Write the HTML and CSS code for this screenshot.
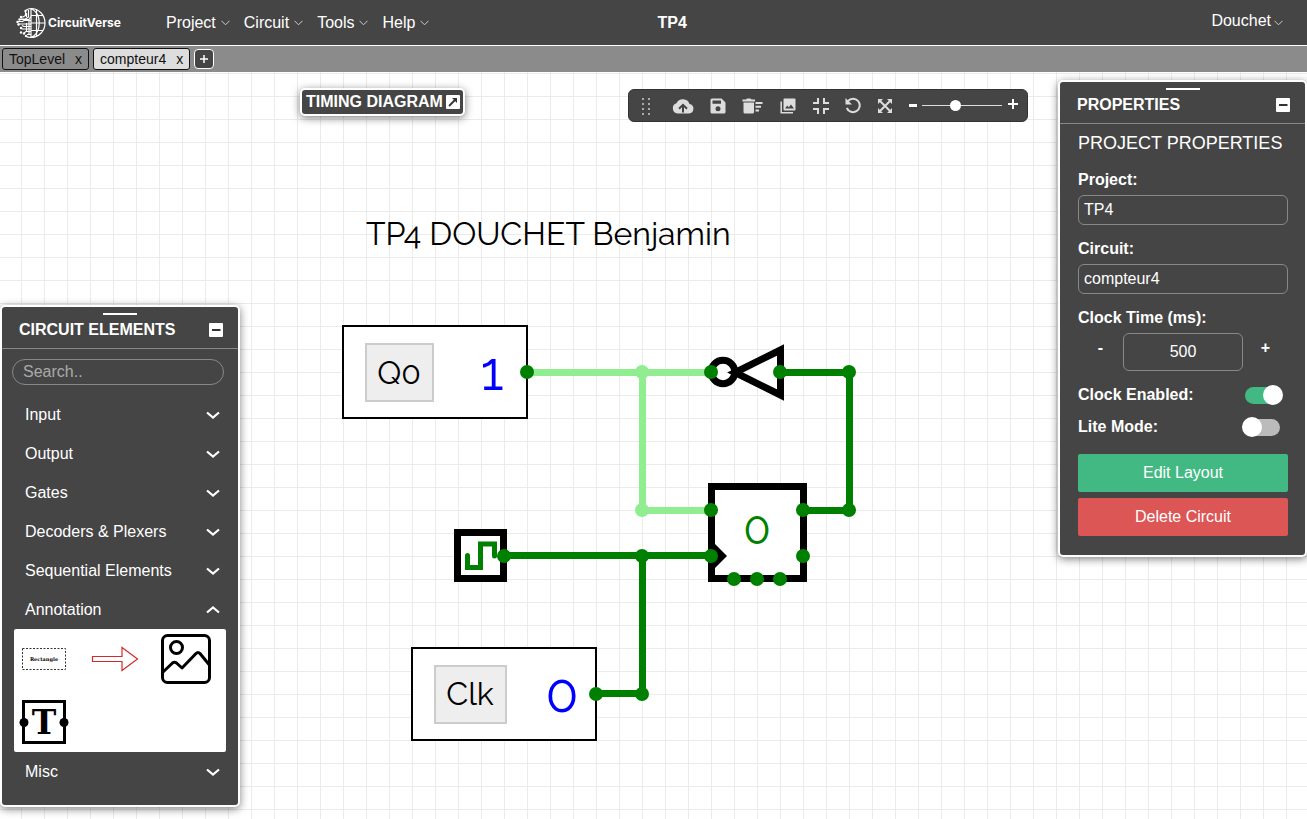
FILE: index.html
```html
<!DOCTYPE html>
<html lang="en">
<head>
<meta charset="utf-8">
<meta name="viewport" content="width=device-width, initial-scale=1">
<title>TP4 - CircuitVerse</title>
<link rel="stylesheet" href="styles.css">
</head>
<body>
<svg class="defs" aria-hidden="true">
  <symbol id="thin-chevron" viewBox="0 0 9 6"><path d="M.5 .8 4.5 4.8 8.500 .8" fill="none" stroke="#ccc" stroke-width="1"/></symbol>
  <symbol id="chevron" viewBox="0 0 16 10"><path d="M2 2.500 8 7.500 14 2.500" fill="none" stroke="#fff" stroke-width="2.200"/></symbol>
  <symbol id="minus-box" viewBox="0 0 14 14"><rect width="14" height="14" rx="1" fill="#fff"/><path d="M3 7h8.500" stroke="#333" stroke-width="2"/></symbol>
</svg>

<header class="navbar">
  <div class="nav-left">
    <a class="logo" href="#">
      <svg width="31" height="32" viewBox="0 0 31 32" fill="none" stroke="#fff" stroke-width="1.200">
        <path d="M15 1.500a14 14.500 0 0 1 0 29zM15 1.500c11 5 11 24 0 29M15 8.500h12M15 16h14M15 23.500h12M20.500 2.500v27"/>
        <path d="M15 1.500c-2 0-4 1-5 1.800M12.500 3v7l-3 2H4.500M9.500 4v4.500L7 10H5M15 9.500l-2 3H3M15 13.500H8l-1.500 1H1M15 17H2M15 19.500H8l-2-1M15 22H6.500L5 21M15 24.500h-5l-2 1.500M15 27.500h-4M13 12v16M10.500 6v4M10.500 16v9M15 30.500c-2 0-4-.5-5-1.500"/>
        <g fill="#fff" stroke="none"><circle cx="9.500" cy="4" r="1.200"/><circle cx="5" cy="10" r="1.200"/><circle cx="3.500" cy="12.500" r="1.200"/><circle cx="1.500" cy="15" r="1.200"/><circle cx="2.500" cy="17.500" r="1.200"/><circle cx="5" cy="21" r="1.200"/><circle cx="5" cy="25.500" r="1.200"/><circle cx="8" cy="26.500" r="1.200"/><circle cx="10" cy="29" r="1.200"/></g>
      </svg>
      <span>CircuitVerse</span>
    </a>
    <nav class="menu">
      <button type="button">Project<svg width="9" height="6"><use href="#thin-chevron"/></svg></button>
      <button type="button">Circuit<svg width="9" height="6"><use href="#thin-chevron"/></svg></button>
      <button type="button">Tools<svg width="9" height="6"><use href="#thin-chevron"/></svg></button>
      <button type="button">Help<svg width="9" height="6"><use href="#thin-chevron"/></svg></button>
    </nav>
  </div>
  <div class="nav-right">
    <strong class="project-name">TP4</strong>
    <button type="button" class="user">Douchet<svg width="9" height="6"><use href="#thin-chevron"/></svg></button>
  </div>
</header>

<div class="tabs">
  <div class="tab"><span>TopLevel</span><button type="button" aria-label="Close TopLevel">x</button></div>
  <div class="tab tab-current"><span>compteur4</span><button type="button" aria-label="Close compteur4">x</button></div>
  <button type="button" class="tab-add" aria-label="New circuit"><svg width="10" height="10" viewBox="0 0 10 10"><path d="M1 5h8M5 1v8" stroke="#fff" stroke-width="1.500"/></svg></button>
</div>

<main class="workspace">
  <svg class="board" width="100%" height="100%">
    <defs>
      <pattern id="grid" x="21" y="1" width="23" height="23" patternUnits="userSpaceOnUse"><path d="M.5 0v23M0 .5h23" stroke="#ebebeb" fill="none"/></pattern>
    </defs>
    <rect width="100%" height="100%" fill="url(#grid)"/>
    <g transform="translate(0 -72)">
      <text class="note" x="366" y="245">TP4 DOUCHET Benjamin</text>

      <g fill="#fff" stroke="#000" stroke-width="2">
        <rect x="343" y="326" width="184" height="92"/>
        <rect x="412" y="648" width="184" height="92"/>
      </g>
      <g fill="#eee" stroke="#ccc" stroke-width="2">
        <rect x="366" y="344" width="67" height="57"/>
        <rect x="435" y="666" width="71" height="57"/>
      </g>
      <text class="tag" x="399" y="384">Q0</text>
      <text class="tag" x="470" y="705">Clk</text>
      <text class="bit" x="492" y="390">1</text>
      <text class="bit" x="562" y="712">0</text>

      <g fill="#fff" stroke="#000" stroke-width="7">
        <rect x="457.500" y="532.500" width="46" height="46"/>
        <rect x="711.500" y="486.500" width="92" height="92"/>
        <circle cx="723" cy="372" r="11.800"/>
        <path d="M780.500 350v45L735 372.500z"/>
      </g>
      <path d="M711 540l16 16-16 16z"/>
      <path d="M467.500 555.500v12h13v-23.500h14v12" fill="none" stroke="green" stroke-width="5" stroke-linecap="round"/>
      <text class="state" x="757" y="544">0</text>

      <g fill="none" stroke-width="7">
        <path d="M527 372.500h184M642.500 372v138M642 510.500h69" stroke="lightgreen"/>
        <path d="M780 372.500h69M849.500 372v138M803 510.500h46M504 555.500h207M642.500 556v138M596 693.500h46" stroke="green"/>
      </g>
      <g fill="lightgreen"><circle cx="642" cy="372" r="7"/><circle cx="642" cy="510" r="7"/></g>
      <g fill="green">
        <circle cx="527" cy="372" r="7"/><circle cx="711" cy="372" r="7"/><circle cx="780" cy="372" r="7"/><circle cx="849" cy="372" r="7"/>
        <circle cx="711" cy="510" r="7"/><circle cx="803" cy="510" r="7"/><circle cx="849" cy="510" r="7"/>
        <circle cx="504" cy="556" r="7"/><circle cx="642" cy="556" r="7"/><circle cx="711" cy="556" r="7"/><circle cx="803" cy="556" r="7"/>
        <circle cx="734" cy="579" r="7"/><circle cx="757" cy="579" r="7"/><circle cx="780" cy="579" r="7"/>
        <circle cx="596" cy="694" r="7"/><circle cx="642" cy="694" r="7"/>
      </g>
    </g>
  </svg>

  <section class="timing">
    <h2>TIMING DIAGRAM</h2>
    <button type="button" aria-label="Open timing diagram"><svg width="14" height="14" viewBox="0 0 14 14"><rect width="14" height="14" rx="1" fill="#fff"/><path d="M3 11 10 4" stroke="#333" stroke-width="1.800"/><path d="M6 3h5v5z" fill="#333"/></svg></button>
  </section>

  <div class="toolbar">
    <svg class="grip" width="10" height="18" viewBox="0 0 10 18" fill="#aaa"><path d="M1 1h2v2H1zM7 1h2v2H7zM1 6h2v2H1zM7 6h2v2H7zM1 11h2v2H1zM7 11h2v2H7zM1 16h2v2H1zM7 16h2v2H7z"/></svg>
    <button type="button" class="tool-wide" aria-label="Save online"><svg width="22" height="16" viewBox="0 0 22 16"><path d="M17.500 6A7 7 0 0 0 4.500 5.200 5.300 5.300 0 0 0 5.500 15.500H17A4.800 4.800 0 0 0 17.500 6z" fill="#ddd"/><path d="M11 14.500V8M7 10.800l4-4 4 4" fill="none" stroke="#454545" stroke-width="2"/></svg></button>
    <button type="button" class="tool-wide" aria-label="Save offline"><svg width="16" height="16" viewBox="0 0 16 16"><path fill-rule="evenodd" fill="#ddd" d="M2 .5h9.500L15.500 4.500V14a1.500 1.500 0 0 1-1.500 1.500H2A1.500 1.500 0 0 1 .5 14V2A1.500 1.500 0 0 1 2 .5zM2.500 2.500v3.200H11V2.500zM8 8.300a2.500 2.500 0 1 0 0 5 2.500 2.500 0 0 0 0-5z"/></svg></button>
    <button type="button" class="tool-wide" aria-label="Delete selected"><svg width="21" height="16" viewBox="0 0 21 16" fill="#ddd"><path d="M1.500 4.500h10.500V14a1.500 1.500 0 0 1-1.500 1.500H3A1.500 1.500 0 0 1 1.500 14zM.5 1.500H4l1-1h3.500l1 1H13V3.500H.5zM13.500 4h7v2h-7zM13.500 7.800h5.500v2h-5.500zM13.500 11.600h3.500v2h-3.500z"/></svg></button>
    <button type="button" class="tool-wide" aria-label="Download as image"><svg width="16" height="16" viewBox="0 0 16 16"><path fill-rule="evenodd" fill="#ddd" d="M4.500.5h10a1 1 0 0 1 1 1v10a1 1 0 0 1-1 1h-10a1 1 0 0 1-1-1v-10a1 1 0 0 1 1-1zM5 10.500h9L11 6.500 8.800 9.300 7.200 7.500z"/><path d="M1.200 3.500V14.800H13" fill="none" stroke="#ddd" stroke-width="1.500"/></svg></button>
    <button type="button" aria-label="Fit to screen"><svg width="16" height="16" viewBox="0 0 16 16" fill="none" stroke="#ddd" stroke-width="2"><path d="M0 5h5V0M11 0v5h5M16 11h-5v5M5 16v-5H0"/></svg></button>
    <button type="button" aria-label="Undo"><svg width="16" height="17" viewBox="0 0 16 17"><path d="M3 4A6.700 6.700 0 1 1 1.800 11" fill="none" stroke="#ddd" stroke-width="2"/><path d="M.5 1V7.500H7z" fill="#ddd"/></svg></button>
    <button type="button" aria-label="View preview"><svg width="16" height="16" viewBox="0 0 16 16"><path d="M3 3l10 10M13 3 3 13" stroke="#ddd" stroke-width="2"/><path fill="#ddd" d="M1 1h5L1 6zM15 1v5L10 1zM1 15v-5l5 5zM15 15h-5l5-5z"/></svg></button>
    <div class="zoom">
      <button type="button" aria-label="Zoom out"><svg width="9" height="10" viewBox="0 0 9 10"><path d="M0 4.500h8" stroke="#fff" stroke-width="3"/></svg></button>
      <input type="range" min="0" max="100" value="40" aria-label="Zoom">
      <button type="button" class="zoom-in" aria-label="Zoom in"><svg width="10" height="12" viewBox="0 0 10 12"><path d="M0 5h10M5 0v10" stroke="#fff" stroke-width="2"/></svg></button>
    </div>
  </div>

  <section class="panel elements">
    <div class="panel-head">
      <h2>CIRCUIT ELEMENTS</h2>
      <button type="button" aria-label="Minimise circuit elements"><svg width="14" height="14"><use href="#minus-box"/></svg></button>
    </div>
    <div class="elements-body">
      <input class="search" type="text" placeholder="Search.." aria-label="Search elements">
      <div class="accordion">
        <button type="button">Input<svg width="16" height="10"><use href="#chevron"/></svg></button>
        <button type="button">Output<svg width="16" height="10"><use href="#chevron"/></svg></button>
        <button type="button">Gates<svg width="16" height="10"><use href="#chevron"/></svg></button>
        <button type="button">Decoders &amp; Plexers<svg width="16" height="10"><use href="#chevron"/></svg></button>
        <button type="button">Sequential Elements<svg width="16" height="10"><use href="#chevron"/></svg></button>
        <button type="button" aria-expanded="true">Annotation<svg class="open" width="16" height="10"><use href="#chevron"/></svg></button>
        <div class="palette">
          <button type="button" aria-label="Rectangle"><svg width="46" height="24" viewBox="0 0 46 24"><rect x="1.500" y="1.500" width="43" height="21" fill="none" stroke="#333" stroke-dasharray="2 1.500"/><text x="23" y="14" class="mini">Rectangle</text></svg></button>
          <button type="button" aria-label="Arrow"><svg width="48" height="26" viewBox="0 0 48 26"><path d="M1.500 10.500H31V1.500L46.500 13 31 24.500V15.500H1.500z" fill="#fff" stroke="#d42a2a" stroke-width="1.200"/></svg></button>
          <button type="button" aria-label="Image"><svg width="50" height="50" viewBox="0 0 50 50" fill="none" stroke="#000" stroke-width="3"><rect x="1.500" y="1.500" width="47" height="47" rx="5"/><circle cx="15.500" cy="13.500" r="6"/><path d="M2 38 11.500 29q2-1.500 4 0L21 34 35 19.500q2-2 4 0L48 30.500" stroke-linejoin="round"/></svg></button>
          <button type="button" aria-label="Text"><svg width="50" height="46" viewBox="0 0 50 46"><rect x="4.500" y="2.500" width="41" height="41" fill="none" stroke="#000" stroke-width="3"/><circle cx="5" cy="23.500" r="4.500"/><circle cx="45" cy="23.500" r="4.500"/><text x="25" y="35" class="glyph">T</text></svg></button>
        </div>
        <button type="button">Misc<svg width="16" height="10"><use href="#chevron"/></svg></button>
      </div>
    </div>
  </section>

  <section class="panel properties">
    <div class="panel-head">
      <h2>PROPERTIES</h2>
      <button type="button" aria-label="Minimise properties"><svg width="14" height="14"><use href="#minus-box"/></svg></button>
    </div>
    <form class="props">
      <h3>PROJECT PROPERTIES</h3>
      <label for="project">Project:</label>
      <input id="project" type="text" value="TP4">
      <label for="circuit">Circuit:</label>
      <input id="circuit" type="text" value="compteur4">
      <label for="clock">Clock Time (ms):</label>
      <div class="stepper">
        <button type="button" aria-label="Decrease">-</button>
        <input id="clock" type="text" value="500">
        <button type="button" aria-label="Increase">+</button>
      </div>
      <div class="switch-row"><label for="enabled">Clock Enabled:</label><input id="enabled" type="checkbox" class="switch" checked></div>
      <div class="switch-row"><label for="lite">Lite Mode:</label><input id="lite" type="checkbox" class="switch"></div>
      <button type="button" class="action action-edit">Edit Layout</button>
      <button type="button" class="action action-delete">Delete Circuit</button>
    </form>
  </section>
</main>
</body>
</html>
```

FILE: styles.css
```css
* { box-sizing: border-box; }

html, body { height: 100%; }

body {
  margin: 0;
  display: flex;
  flex-direction: column;
  overflow: hidden;
  background: #fff;
  color: #fff;
  font: 16px/20px "Liberation Sans", Arial, sans-serif;
}

button {
  display: inline-flex;
  align-items: center;
  padding: 0;
  border: 0;
  background: none;
  color: inherit;
  font: inherit;
  cursor: pointer;
}

input {
  margin: 0;
  font: inherit;
  color: #fff;
}

svg { display: block; flex: none; }

h2, h3 { margin: 0; }

h2 { font-size: 16px; line-height: 20px; }

.defs { position: absolute; width: 0; height: 0; }

/* Top bar */
.navbar {
  display: grid;
  grid-template-columns: 1fr 1fr;
  align-items: center;
  height: 46px;
  flex: none;
  background: #454545;
  border-bottom: 1px solid #fff;
}

.nav-left { display: flex; align-items: center; gap: 45px; padding-left: 16px; }

.logo {
  display: flex;
  align-items: center;
  gap: 1px;
  color: #fff;
  font: 700 12px/16px Inter, "Liberation Sans", sans-serif;
  text-decoration: none;
}

.menu { display: flex; gap: 14px; }

.menu button { gap: 5px; }

.nav-right {
  display: flex;
  align-items: center;
  justify-content: space-between;
  padding: 0 24px 0 4px;
}

.user { gap: 3px; padding-bottom: 4px; }

.user svg { margin-top: 4px; }

/* Circuit tabs */
.tabs {
  display: flex;
  align-items: center;
  gap: 4px;
  height: 26px;
  flex: none;
  padding: 0 2px;
  background: #8b8b8b;
  color: #111;
  font-size: 14px;
}

.tab {
  display: flex;
  align-items: center;
  gap: 10px;
  height: 22px;
  padding: 0 6px;
  border: 1px solid #111;
  border-radius: 3px;
}

.tab-current { background: #ddd; }

.tab-add {
  justify-content: center;
  width: 20px;
  height: 20px;
  border: 1px solid #fff;
  border-radius: 4px;
  background: #454545;
}

/* Drawing board */
.workspace { position: relative; flex: 1; min-height: 0; }

.board { position: absolute; inset: 0; }

.note, .tag, .bit, .state { font-family: Raleway, Lato, sans-serif; }

.note, .tag { font-size: 32px; }

.tag, .bit, .state, .mini, .glyph { text-anchor: middle; }

.bit { font-size: 54px; fill: #00f; }

.state { font-size: 45px; fill: green; }

.mini { font: 700 5px "DejaVu Serif", serif; }

.glyph { font: 700 33px "DejaVu Serif", serif; }

/* Floating windows */
.timing, .panel {
  position: absolute;
  background: #454545;
  border: 2px solid #fff;
  border-radius: 5px;
  box-shadow: 0 2px 8px rgba(0, 0, 0, 0.5);
}

.timing {
  top: 16px;
  left: 300px;
  display: flex;
  align-items: center;
  gap: 3px;
  height: 28px;
  padding: 0 3px 0 4px;
}

.toolbar {
  position: absolute;
  top: 17px;
  left: 628px;
  display: flex;
  align-items: center;
  width: 400px;
  height: 33px;
  padding: 0 9px 0 12px;
  border: 1px solid #333;
  border-radius: 6px;
  background: #454545;
}

.grip { margin-right: 14px; }

.toolbar > button { justify-content: center; width: 32px; }

.toolbar > .tool-wide { width: 35px; }

.zoom { display: flex; align-items: center; gap: 4px; margin-left: auto; }

.zoom-in { margin-left: 2px; padding-bottom: 2px; }

.zoom input {
  appearance: none;
  width: 80px;
  height: 11px;
  background: linear-gradient(#ddd, #ddd) center / 100% 1px no-repeat;
}

.zoom input::-webkit-slider-thumb {
  appearance: none;
  width: 11px;
  height: 11px;
  border-radius: 50%;
  background: #fff;
}

.panel-head {
  position: relative;
  display: flex;
  align-items: center;
  justify-content: space-between;
  height: 42px;
  padding: 5px 15px 0 17px;
  border-bottom: 1px solid #888;
}

.panel-head::before {
  content: "";
  position: absolute;
  top: 6px;
  left: 50%;
  width: 34px;
  height: 2px;
  margin-left: -17px;
  background: #fff;
}

.elements { left: 0; bottom: 12px; width: 240px; }

.elements-body { padding: 10px 12px 14px 10px; }

.search {
  display: block;
  width: calc(100% - 2px);
  height: 26px;
  padding: 0 10px;
  border: 1px solid #888;
  border-radius: 13px;
  background: none;
}

.search::placeholder { color: #aaa; }

.accordion { display: flex; flex-direction: column; padding: 10px 0 0 2px; }

.accordion > button {
  justify-content: space-between;
  height: 39px;
  padding: 0 5px 0 11px;
}

.accordion .open { transform: rotate(180deg); }

.palette {
  display: grid;
  grid-template-columns: 60px 60px 60px;
  grid-auto-rows: 60px;
  gap: 3px 11px;
  border-radius: 2px;
  background: #fff;
}

.palette button { justify-content: center; }

/* Properties */
.properties { top: 8px; right: 0; width: 249px; }

.props { display: flex; flex-direction: column; padding: 9px 17px 19px 18px; }

.props h3 { padding-bottom: 16px; font-size: 18px; font-weight: 400; line-height: 20px; }

.props label { padding: 1px 0 5px; font-weight: 700; }

.props input[type="text"] {
  height: 30px;
  margin-bottom: 13px;
  padding: 0 5px;
  border: 1px solid #888;
  border-radius: 6px;
  background: none;
}

.stepper { display: grid; grid-template-columns: 45px 1fr 45px; padding-bottom: 8px; }

.stepper button { justify-content: center; padding-bottom: 8px; font-weight: 700; }

.props .stepper input[type="text"] { width: 100%; height: 38px; margin: 0; text-align: center; }

.switch-row {
  display: flex;
  align-items: center;
  justify-content: space-between;
  height: 32px;
  padding-right: 8px;
}

.props .switch-row label { padding: 0; }

.switch {
  appearance: none;
  position: relative;
  width: 35px;
  height: 17px;
  border-radius: 9px;
  background: #bbb;
}

.switch::before {
  content: "";
  position: absolute;
  top: -2px;
  left: -3px;
  width: 20px;
  height: 20px;
  border-radius: 50%;
  background: #fff;
}

.switch:checked { background: #42b983; }

.switch:checked::before { left: 18px; }

.action {
  justify-content: center;
  height: 38px;
  margin-top: 6px;
  border-radius: 2px;
}

.action-edit { margin-top: 11px; background: #42b983; }

.action-delete { background: #dc5656; }
```
